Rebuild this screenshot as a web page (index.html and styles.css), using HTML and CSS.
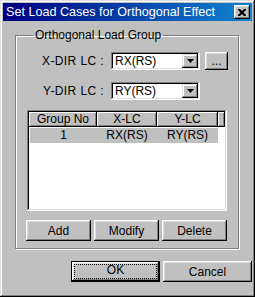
FILE: index.html
```html
<!DOCTYPE html>
<html lang="en">
<head>
  <meta charset="UTF-8">
  <title>Set Load Cases for Orthogonal Effect</title>
  <link rel="stylesheet" href="styles.css">
</head>
<body>

<div class="window">
  <!-- Title bar -->
  <div class="titlebar">
    <span class="title">Set Load Cases for Orthogonal Effect</span>
    <button class="close-btn" type="button" aria-label="Close">
      <svg width="8" height="7" viewBox="0 0 8 7">
        <path d="M0 0h2l2 2 2-2h2v1l-2.5 2.5L8 6v1H6L4 5 2 7H0V6l2.5-2.5L0 1z" fill="#000"/>
      </svg>
    </button>
  </div>

  <div class="dlg-body">
    <fieldset class="group">
      <legend>Orthogonal Load Group</legend>

      <div class="field-row">
        <label class="field-label">X-DIR LC :</label>
        <div class="combo">
          <span class="combo-text">RX(RS)</span>
          <span class="combo-btn">
            <svg width="7" height="4" viewBox="0 0 7 4"><path d="M0 0h7L3.5 4z" fill="#000"/></svg>
          </span>
        </div>
        <button class="btn btn-dots" type="button">...</button>
      </div>

      <div class="field-row">
        <label class="field-label">Y-DIR LC :</label>
        <div class="combo">
          <span class="combo-text">RY(RS)</span>
          <span class="combo-btn">
            <svg width="7" height="4" viewBox="0 0 7 4"><path d="M0 0h7L3.5 4z" fill="#000"/></svg>
          </span>
        </div>
      </div>

      <!-- Load group list -->
      <div class="list">
        <div class="list-head">
          <span class="hcol col-no">Group No</span>
          <span class="hcol col-x">X-LC</span>
          <span class="hcol col-y">Y-LC</span>
          <span class="hcol col-rest"></span>
        </div>
        <div class="list-row selected">
          <span class="col-no">1</span>
          <span class="col-x">RX(RS)</span>
          <span class="col-y">RY(RS)</span>
        </div>
      </div>

      <div class="btn-row">
        <button class="btn btn-list" type="button">Add</button>
        <button class="btn btn-list" type="button">Modify</button>
        <button class="btn btn-list" type="button">Delete</button>
      </div>
    </fieldset>

    <div class="dlg-buttons">
      <button class="btn btn-dlg btn-default" type="button"><span class="focus">OK</span></button>
      <button class="btn btn-dlg" type="button">Cancel</button>
    </div>
  </div>
</div>

</body>
</html>
```

FILE: styles.css
```css
/* Reset */
* {
  box-sizing: border-box;
  margin: 0;
  padding: 0;
}
html, body {
  background: #c0c0c0;
  font-family: 'Liberation Sans', Arial, sans-serif;
  font-size: 12px;
  color: #000;
}

/* Dialog frame */
.window {
  width: 255px;
  height: 297px;
  padding: 3px;
  background: #c0c0c0;
  box-shadow: inset -1px -1px #000, inset 1px 1px #dfdfdf,
              inset -2px -2px #808080, inset 2px 2px #fff;
}

/* Title bar */
.titlebar {
  height: 18px;
  display: flex;
  align-items: center;
  justify-content: space-between;
  padding: 0 2px 0 3px;
  background: linear-gradient(to right, #000080, #1084d0);
}
.title {
  color: #fff;
  font-size: 12.6px;
  line-height: 18px;
  white-space: nowrap;
}
.close-btn {
  width: 16px;
  height: 14px;
  display: flex;
  align-items: center;
  justify-content: center;
  border: none;
  background: #c0c0c0;
  box-shadow: inset -1px -1px #000, inset 1px 1px #fff,
              inset -2px -2px #808080, inset 2px 2px #dfdfdf;
}

.dlg-body {
  padding: 7px 0 0 12px;
}

/* Group box */
.group {
  width: 224px;
  border: 1px solid #808080;
  box-shadow: inset 1px 1px #fff, 1px 1px #fff;
  padding: 10px 10px 7px 11px;
}
.group legend {
  margin-left: 6px;
  padding: 0 2px;
  line-height: 14px;
}

/* Label + combo rows */
.field-row {
  display: flex;
  align-items: center;
  height: 18px;
  margin-bottom: 12px;
}
.field-label {
  width: 84px;
  padding-right: 7px;
  text-align: right;
  white-space: nowrap;
  letter-spacing: 0.4px;
}
.combo {
  width: 89px;
  height: 18px;
  display: flex;
  align-items: center;
  justify-content: space-between;
  padding: 2px;
  background: #fff;
  box-shadow: inset -1px -1px #fff, inset 1px 1px #808080,
              inset -2px -2px #dfdfdf, inset 2px 2px #000;
}
.combo-text {
  padding-left: 2px;
  line-height: 14px;
}
.combo-btn {
  width: 16px;
  height: 14px;
  display: flex;
  align-items: center;
  justify-content: center;
  background: #c0c0c0;
  box-shadow: inset -1px -1px #000, inset 1px 1px #dfdfdf,
              inset -2px -2px #808080, inset 2px 2px #fff;
}

/* Buttons */
.btn {
  font-family: inherit;
  font-size: 12px;
  color: #000;
  border: none;
  background: #c0c0c0;
  box-shadow: inset -1px -1px #000, inset 1px 1px #fff,
              inset -2px -2px #808080, inset 2px 2px #dfdfdf;
}
.btn-dots {
  width: 23px;
  height: 18px;
  margin-left: 5px;
  line-height: 12px;
}

/* List view */
.list {
  width: 200px;
  height: 101px;
  margin-top: -2px;
  padding: 2px;
  background: #fff;
  box-shadow: inset -1px -1px #fff, inset 1px 1px #808080,
              inset -2px -2px #dfdfdf, inset 2px 2px #000;
}
.list-head {
  display: flex;
  height: 15px;
}
.hcol {
  height: 15px;
  line-height: 14px;
  text-align: center;
  background: #c0c0c0;
  box-shadow: inset -1px -1px #000, inset 1px 1px #fff,
              inset -2px -2px #808080;
}
.col-no { width: 68px; }
.col-x { width: 60px; }
.col-y { width: 61px; }
.col-rest { flex: 1; }

.list-row {
  display: flex;
  width: 188px;
  height: 15px;
  margin: 1px 0 0 1px;
  line-height: 15px;
}
.list-row span {
  text-align: center;
}
.list-row.selected {
  background: #c0c0c0;
}
.list-row .col-no { width: 67px; }

.btn-row {
  display: flex;
  gap: 3px;
  margin: 9px 0 0 -1px;
}
.btn-list {
  width: 65px;
  height: 21px;
}

/* OK / Cancel */
.dlg-buttons {
  display: flex;
  gap: 3px;
  justify-content: flex-end;
  width: 237px;
  margin-top: 12px;
}
.btn-dlg {
  width: 89px;
  height: 21px;
}
.btn-default {
  padding: 4px;
  box-shadow: inset 0 0 0 1px #000, inset -2px -2px #000, inset 2px 2px #fff,
              inset -3px -3px #808080, inset 3px 3px #dfdfdf;
}
.focus {
  display: block;
  height: 13px;
  line-height: 11px;
  outline: 1px dotted #000;
}
```
